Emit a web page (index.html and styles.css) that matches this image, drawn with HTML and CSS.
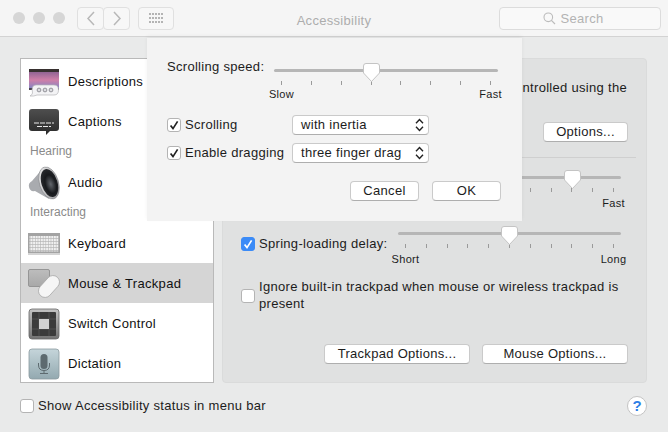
FILE: index.html
```html
<!DOCTYPE html>
<html lang="en">
<head>
    <meta charset="UTF-8">
    <title>Accessibility</title>
    <link rel="stylesheet" href="styles.css">
</head>
<body>
    <svg class="defs" width="0" height="0">
        <symbol id="check" viewBox="0 0 14 14">
            <path d="M3.6 7.4 L6 10.6 L10.6 3.4" fill="none" stroke="currentColor" stroke-width="1.7"/>
        </symbol>
        <symbol id="thumb" viewBox="0 0 17 19">
            <path d="M3 .5 H14 Q16.500 .5 16.500 3 V10 L8.500 18.500 L.5 10 V3 Q.5 .5 3 .5 Z" fill="#fff" stroke="#c4c4c4"/>
        </symbol>
        <symbol id="updown" viewBox="0 0 9 14">
            <path d="M1 5.200 L4.500 1.600 L8 5.200 M1 8.800 L4.500 12.400 L8 8.800" fill="none" stroke="#222" stroke-width="1.400"/>
        </symbol>
    </svg>

    <div class="toolbar">
        <div class="lights"><span></span><span></span><span></span></div>
        <div class="nav">
            <span class="tool-btn nav-btn"><svg width="10" height="15" viewBox="0 0 10 15"><path d="M8 1 L2 7.500 L8 14" fill="none" stroke="#b8b8b8" stroke-width="1.500"/></svg></span>
            <span class="tool-btn nav-btn"><svg width="10" height="15" viewBox="0 0 10 15"><path d="M2 1 L8 7.500 L2 14" fill="none" stroke="#b8b8b8" stroke-width="1.500"/></svg></span>
        </div>
        <span class="tool-btn grid-btn">
            <svg width="14" height="10" viewBox="0 0 14 10">
                <path d="M0 1H14M0 5H14M0 9H14" stroke="#b4b4b4" stroke-width="2" stroke-dasharray="2 1"/>
            </svg>
        </span>
        <div class="title">Accessibility</div>
        <div class="search">
            <svg width="13" height="13" viewBox="0 0 13 13"><circle cx="5.300" cy="5.300" r="4.300" fill="none" stroke="#bcbcbc" stroke-width="1.100"/><path d="M8.400 8.400 L12 12" stroke="#bcbcbc" stroke-width="1.200"/></svg>
            Search
        </div>
    </div>

    <div class="content">
        <div class="sidebar">
            <div class="item">
                <svg class="icon" width="32" height="30" viewBox="0 0 32 30">
                    <defs><linearGradient id="dusk" x1="0" y1="0" x2="0" y2="1"><stop offset="0" stop-color="#7a5a8c"/><stop offset=".55" stop-color="#cf7fa8"/><stop offset="1" stop-color="#7f86c6"/></linearGradient></defs>
                    <rect x="1" y="2" width="30" height="20" fill="url(#dusk)"/>
                    <rect x="1" y="2" width="30" height="3" fill="#37302f"/>
                    <rect x="1" y="21" width="30" height="2" fill="#4a4450"/>
                    <path d="M8 18 H26 Q30.500 18 30.500 23 T26 28 H9 Q6 29.500 2 29 Q4.500 27.500 4.500 26 Q3 18 8 18 Z" fill="#f3f3f5" stroke="#b4b4b8" stroke-width=".7"/>
                    <g fill="#dcdce0" stroke="#7f7f86" stroke-width=".8"><circle cx="11" cy="23" r="1.900"/><circle cx="17" cy="23" r="1.900"/><circle cx="23" cy="23" r="1.900"/></g>
                </svg>
                <span>Descriptions</span>
            </div>
            <div class="item">
                <svg class="icon" width="32" height="30" viewBox="0 0 32 30">
                    <defs><linearGradient id="slate" x1="0" y1="0" x2="0" y2="1"><stop offset="0" stop-color="#4e4e4e"/><stop offset="1" stop-color="#2a2a2a"/></linearGradient></defs>
                    <path d="M4 2 H28 Q31 2 31 5 V21 Q31 24 28 24 H22 L18 28 V24 H4 Q1 24 1 21 V5 Q1 2 4 2 Z" fill="url(#slate)"/>
                    <path d="M6 16h20M9 19.500h14" stroke="#e8e8e8" stroke-width="1" stroke-dasharray="5 1"/>
                </svg>
                <span>Captions</span>
            </div>
            <div class="group">Hearing</div>
            <div class="item">
                <svg class="icon" width="32" height="34" viewBox="0 0 32 34">
                    <defs>
                        <radialGradient id="cone" cx=".55" cy=".55" r=".6"><stop offset="0" stop-color="#62666c"/><stop offset=".55" stop-color="#17191c"/><stop offset="1" stop-color="#2b2d31"/></radialGradient>
                        <linearGradient id="rim" x1="0" y1="0" x2="1" y2="1"><stop offset="0" stop-color="#f2f2f2"/><stop offset="1" stop-color="#8c8c90"/></linearGradient>
                    </defs>
                    <path d="M16 1 L4 15 Q0 17 1 21 Q2 26 7 25 L21 33 Z" fill="#a9abaf"/>
                    <ellipse cx="21" cy="17" rx="9.500" ry="16.500" transform="rotate(-17 21 17)" fill="url(#rim)" stroke="#77787c" stroke-width=".5"/>
                    <ellipse cx="21.500" cy="17" rx="8" ry="14.500" transform="rotate(-17 21.500 17)" fill="url(#cone)"/>
                </svg>
                <span>Audio</span>
            </div>
            <div class="group">Interacting</div>
            <div class="item">
                <svg class="icon" width="32" height="22" viewBox="0 0 32 22">
                    <defs><pattern id="keys" width="2.600" height="3" patternUnits="userSpaceOnUse"><rect width="2.600" height="3" fill="#b5b5b5"/><rect width="2" height="2.300" fill="#f0f0f0"/></pattern></defs>
                    <rect y="0" width="32" height="21" fill="#a3a3a3"/>
                    <rect y="20" width="32" height="2" fill="#d4d4d4"/>
                    <rect x="1.500" y="3" width="29" height="15.500" fill="url(#keys)"/>
                </svg>
                <span>Keyboard</span>
            </div>
            <div class="item selected">
                <svg class="icon" width="32" height="32" viewBox="0 0 32 32">
                    <defs><linearGradient id="pad" x1="0" y1="0" x2="0" y2="1"><stop offset="0" stop-color="#bdbdbd"/><stop offset="1" stop-color="#a8a8a8"/></linearGradient></defs>
                    <rect x=".5" y="1.500" width="21" height="17" rx="1.500" fill="url(#pad)" stroke="#959595"/>
                    <rect x="14.500" y="6" width="13" height="25" rx="6.500" transform="rotate(42 21 18.500)" fill="#f6f6f6" stroke="#a4a4a4" stroke-width=".7"/>
                </svg>
                <span>Mouse &amp; Trackpad</span>
            </div>
            <div class="item">
                <svg class="icon" width="32" height="32" viewBox="0 0 32 32">
                    <defs><linearGradient id="frame" x1="0" y1="0" x2="0" y2="1"><stop offset="0" stop-color="#c4c4c4"/><stop offset="1" stop-color="#727272"/></linearGradient></defs>
                    <rect x="1" y="1" width="30" height="30" rx="3" fill="url(#frame)" stroke="#666" stroke-width=".8"/>
                    <rect x="4" y="4" width="24" height="24" rx="1" fill="#3b3b3b"/>
                    <path d="M11 4v24M21 4v24M4 11h24M4 21h24" stroke="#555" stroke-width=".8"/>
                    <rect x="11" y="11" width="10" height="10" fill="#d2d2d2"/>
                </svg>
                <span>Switch Control</span>
            </div>
            <div class="item">
                <svg class="icon" width="32" height="32" viewBox="0 0 32 32">
                    <defs><linearGradient id="mic" x1="0" y1="0" x2="0" y2="1"><stop offset="0" stop-color="#c5d5da"/><stop offset="1" stop-color="#93a9b0"/></linearGradient></defs>
                    <rect x="1" y="1" width="30" height="30" rx="3" fill="url(#mic)" stroke="#8b9a9f" stroke-width=".8"/>
                    <rect x="12.500" y="6" width="7" height="15" rx="3.500" fill="#5d6a6f"/>
                    <path d="M10.500 15 V17 Q10.500 22.500 16 22.500 Q21.500 22.500 21.500 17 V15 M16 22.500 V25 M12 25.500 H20" fill="none" stroke="#5d6a6f" stroke-width="1"/>
                </svg>
                <span>Dictation</span>
            </div>
        </div>

        <div class="panel">
            <div class="panel-text">controlled using the</div>
            <div class="right-btn"><button class="btn btn-options">Options...</button></div>
            <div class="divider"></div>
            <div class="slider-row">
                <div class="slider slider-panel">
                    <div class="track"><svg class="thumb" style="left: 78%" width="17" height="19"><use href="#thumb"/></svg></div>
                    <div class="ticks"><i></i><i></i><i></i><i></i><i></i><i></i><i></i><i></i><i></i><i></i><i></i></div>
                    <div class="slider-labels"><span>&nbsp;</span><span>Fast</span></div>
                </div>
            </div>
            <div class="spring-row">
                <div class="check-row">
                    <span class="box box-on"><svg width="14" height="14"><use href="#check"/></svg></span>
                    Spring-loading delay:
                </div>
                <div class="slider slider-panel slider-spring">
                    <div class="track"><svg class="thumb" style="left: 49.800%" width="17" height="19"><use href="#thumb"/></svg></div>
                    <div class="ticks"><i></i><i></i><i></i><i></i><i></i><i></i><i></i><i></i><i></i><i></i><i></i></div>
                    <div class="slider-labels"><span>Short</span><span>Long</span></div>
                </div>
            </div>
            <div class="check-row ignore-row">
                <span class="box"></span>
                <span>Ignore built-in trackpad when mouse or wireless trackpad is present</span>
            </div>
            <div class="panel-buttons">
                <button class="btn btn-wide">Trackpad Options...</button>
                <button class="btn btn-wide">Mouse Options...</button>
            </div>
        </div>
    </div>

    <div class="footer">
        <div class="check-row">
            <span class="box"></span>
            Show Accessibility status in menu bar
        </div>
        <span class="help">?</span>
    </div>

    <div class="sheet">
        <div class="speed-row">
            <span class="speed-label">Scrolling speed:</span>
            <div class="slider">
                <div class="track"><svg class="thumb" style="left: 43.300%" width="17" height="19"><use href="#thumb"/></svg></div>
                <div class="ticks"><i></i><i></i><i></i><i></i><i></i><i></i><i></i><i></i></div>
                <div class="slider-labels"><span>Slow</span><span>Fast</span></div>
            </div>
        </div>
        <div class="sheet-form">
            <div class="check-row">
                <span class="box"><svg width="14" height="14"><use href="#check"/></svg></span>
                Scrolling
            </div>
            <div class="select">with inertia<svg width="9" height="14"><use href="#updown"/></svg></div>
            <div class="check-row">
                <span class="box"><svg width="14" height="14"><use href="#check"/></svg></span>
                Enable dragging
            </div>
            <div class="select">three finger drag<svg width="9" height="14"><use href="#updown"/></svg></div>
        </div>
        <div class="sheet-buttons">
            <button class="btn btn-sheet">Cancel</button>
            <button class="btn btn-sheet">OK</button>
        </div>
    </div>
</body>
</html>
```

FILE: styles.css
```css
html, body {
    margin: 0;
    height: 100%;
}
body {
    position: relative;
    width: 668px;
    height: 432px;
    overflow: hidden;
    background-color: #e9eaea;
    font-family: "Liberation Sans", Arial, sans-serif;
    font-size: 13px;
    line-height: 16px;
    letter-spacing: .3px;
    color: #1c1c1c;
}
.defs {
    position: absolute;
}

/* toolbar */
.toolbar {
    display: flex;
    align-items: center;
    position: relative;
    height: 37px;
    box-sizing: border-box;
    padding: 0 7px 0 13px;
    background-color: #f5f5f5;
    border-bottom: 1px solid #d3d3d3;
}
.lights {
    display: flex;
    gap: 8px;
}
.lights span {
    width: 12px;
    height: 12px;
    border-radius: 50%;
    background-color: #d6d6d6;
}
.nav {
    display: flex;
    margin-left: 12px;
}
.tool-btn {
    display: flex;
    align-items: center;
    justify-content: center;
    height: 23px;
    box-sizing: border-box;
    background-color: #f7f7f7;
    border: 1px solid #e0e0e0;
    border-radius: 4px;
}
.nav-btn {
    width: 27px;
}
.nav-btn + .nav-btn {
    margin-left: -1px;
}
.grid-btn {
    width: 36px;
    margin-left: 8px;
}
.title {
    position: absolute;
    left: 0;
    right: 0;
    top: 13px;
    text-align: center;
    color: #adadad;
}
.search {
    display: flex;
    align-items: center;
    justify-content: center;
    gap: 5px;
    width: 162px;
    height: 23px;
    box-sizing: border-box;
    margin-left: auto;
    padding: 1px 14px 0 0;
    background-color: #f9f9f9;
    border: 1px solid #dcdcdc;
    border-radius: 4px;
    color: #b3b3b3;
}

/* main area */
.content {
    display: flex;
    gap: 8px;
    padding: 21px 21px 0 20px;
}
.sidebar {
    width: 194px;
    height: 325px;
    box-sizing: border-box;
    padding-top: 2px;
    overflow: hidden;
    background-color: #fff;
    border: 1px solid #b9b9b9;
    color: #111;
}
.item {
    display: flex;
    align-items: center;
    height: 40px;
    padding-left: 7px;
}
.item span {
    padding-top: 2px;
}
.icon {
    flex: none;
    margin: 1px 8px 0 0;
}
.selected {
    background-color: #d5d5d5;
}
.group {
    height: 21px;
    padding-left: 9px;
    line-height: 21px;
    font-size: 12px;
    letter-spacing: 0;
    color: #8a8a8a;
}
.panel {
    width: 425px;
    height: 325px;
    box-sizing: border-box;
    padding: 21px 19px 0 18px;
    background-color: #e0e1e1;
    border: 1px solid #dadbdb;
    border-radius: 4px;
}
.panel-text {
    text-align: right;
    white-space: nowrap;
}
.right-btn {
    display: flex;
    justify-content: flex-end;
    margin: 26px -1px 0 0;
}
.divider {
    height: 1px;
    margin: 15px -9px 0 0;
    background-color: #cfcfcf;
}
.slider-row {
    display: flex;
    justify-content: flex-end;
    margin: 11px 6px 0 0;
}
.spring-row {
    display: flex;
    justify-content: space-between;
    margin: 12px 6px 0 0;
}
.ignore-row {
    align-items: flex-start;
    margin-top: 12px;
    padding-right: 4px;
    line-height: 17px;
}
.ignore-row .box {
    margin-top: 1px;
}
.panel-buttons {
    display: flex;
    justify-content: flex-end;
    gap: 12px;
    margin: 32px -1px 0 0;
}

/* controls */
.check-row {
    display: flex;
    align-items: center;
    gap: 4px;
}
.box {
    flex: none;
    width: 14px;
    height: 14px;
    box-sizing: border-box;
    background-color: #fff;
    border: 1px solid #b4b4b4;
    border-radius: 3px;
    color: #222;
}
.box svg {
    display: block;
    margin: -1px;
}
.box-on {
    background-color: #3b8bf7;
    border-color: #3b8bf7;
    color: #fff;
}
.btn {
    height: 20px;
    padding: 0;
    font-family: inherit;
    font-size: 13px;
    line-height: 16px;
    letter-spacing: .3px;
    color: #1c1c1c;
    background-color: #fff;
    border: 1px solid #cacaca;
    border-bottom-color: #aeaeae;
    border-radius: 4px;
}
.btn-options {
    width: 85px;
}
.btn-wide {
    width: 146px;
}
.btn-sheet {
    width: 69px;
}
.select {
    display: flex;
    align-items: center;
    justify-content: space-between;
    height: 20px;
    box-sizing: border-box;
    padding: 0 4px 0 8px;
    background-color: #fff;
    border: 1px solid #cacaca;
    border-bottom-color: #aeaeae;
    border-radius: 4px;
}

/* sliders */
.slider {
    width: 224px;
}
.slider-panel {
    width: 223px;
}
.track {
    position: relative;
    height: 3px;
    margin: 7px 0 9px;
    background-color: #b6b6b6;
    border-radius: 2px;
}
.thumb {
    position: absolute;
    top: -6px;
    margin-left: -8px;
}
.ticks {
    display: flex;
    justify-content: space-between;
    padding: 0 7px;
}
.ticks i {
    width: 1px;
    height: 4px;
    background-color: #9a9a9a;
}
.slider-labels {
    display: flex;
    justify-content: space-between;
    margin-top: 2px;
    padding: 0 7px;
    font-size: 11px;
    line-height: 14px;
}
.slider-labels span {
    display: flex;
    justify-content: center;
    width: 1px;
    white-space: nowrap;
}
.slider-panel .slider-labels {
    margin-top: 4px;
}
.slider-spring {
    margin-top: 3px;
}

/* footer */
.footer {
    display: flex;
    align-items: center;
    justify-content: space-between;
    padding: 13px 21px 0 20px;
}
.help {
    width: 20px;
    height: 20px;
    box-sizing: border-box;
    background-color: #fff;
    border: 1px solid #c4c4c4;
    border-radius: 50%;
    text-align: center;
    font-size: 15px;
    font-weight: bold;
    line-height: 18px;
    letter-spacing: 0;
    color: #2f7fe6;
}

/* sheet over the window */
.sheet {
    position: absolute;
    left: 147px;
    top: 38px;
    width: 375px;
    height: 183px;
    box-sizing: border-box;
    padding: 21px 21px 0 20px;
    background-color: #f3f3f3;
    box-shadow: 0 -2px 4px rgba(0, 0, 0, .05);
}
.speed-row {
    display: flex;
}
.speed-label {
    width: 107px;
    flex: none;
}
.speed-row .slider {
    margin-top: 3px;
}
.sheet-form {
    display: grid;
    grid-template-columns: 125px 137px;
    align-items: center;
    row-gap: 8px;
    margin-top: 14px;
}
.sheet-buttons {
    display: flex;
    justify-content: flex-end;
    gap: 13px;
    margin-top: 18px;
}
```
